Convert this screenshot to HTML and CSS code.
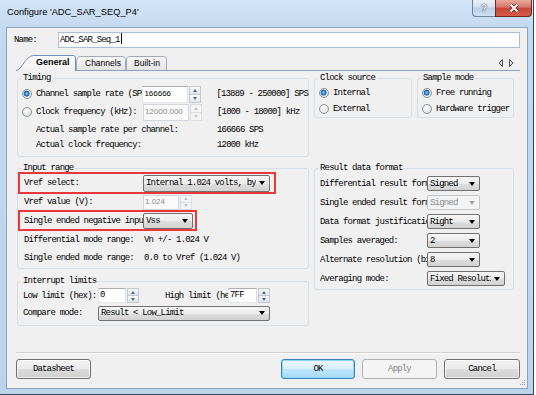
FILE: index.html
```html
<!DOCTYPE html>
<html lang="en">
<head>
    <meta charset="UTF-8">
    <meta name="viewport" content="width=device-width, initial-scale=1.0">
    <title>Configure 'ADC_SAR_SEQ_P4'</title>
    <link rel="stylesheet" href="styles.css">
</head>
<body>
<div class="window">
    <div class="titlebar">
        <span class="title">Configure 'ADC_SAR_SEQ_P4'</span>
        <div class="caption">
            <span class="cap-help">?</span>
            <span class="cap-close">
                <svg width="14" height="10" viewBox="0 0 14 10">
                    <path d="M3.5,1.5 L10.5,8.5 M10.5,1.5 L3.5,8.5" stroke="#5a2a26" stroke-width="3.4"/>
                    <path d="M3.5,1.5 L10.5,8.5 M10.5,1.5 L3.5,8.5" stroke="#fff" stroke-width="1.8"/>
                </svg>
            </span>
        </div>
    </div>

    <div class="client">
        <div class="name-row">
            <label>Name:</label>
            <div class="name-box">ADC_SAR_Seq_1<span class="caret"></span></div>
        </div>

        <div class="tabstrip">
            <div class="tab tab-active">
                <svg width="60" height="16" viewBox="0 0 60 16">
                    <defs>
                        <linearGradient id="tabOn" x1="0" y1="0" x2="0" y2="1">
                            <stop offset="0" stop-color="#ffffff"/>
                            <stop offset="1" stop-color="#f0f0f0"/>
                        </linearGradient>
                    </defs>
                    <path d="M0,16 L0,15.5 C6,15.5 9,0.5 18,0.5 L57,0.5 Q59.5,0.5 59.5,3 L59.5,16 Z" fill="url(#tabOn)"/>
                    <path d="M0,15.5 C6,15.5 9,0.5 18,0.5 L57,0.5 Q59.5,0.5 59.5,3 L59.5,16" fill="none" stroke="#6f8fbf"/>
                </svg>
                <span>General</span>
            </div>
            <div class="tab tab-channels">
                <svg width="50" height="14" viewBox="0 0 50 14">
                    <defs>
                        <linearGradient id="tabOff" x1="0" y1="0" x2="0" y2="1">
                            <stop offset="0" stop-color="#f9f9f9"/>
                            <stop offset="1" stop-color="#e4e4e4"/>
                        </linearGradient>
                    </defs>
                    <path d="M0.5,14 L0.5,5 Q1,0.5 5,0.5 L46.5,0.5 Q49.5,0.5 49.5,3.5 L49.5,14" fill="url(#tabOff)" stroke="#a3aab4"/>
                </svg>
                <span>Channels</span>
            </div>
            <div class="tab tab-builtin">
                <svg width="41" height="14" viewBox="0 0 41 14">
                    <path d="M0.5,14 L0.5,3.5 Q0.5,0.5 3.5,0.5 L37.5,0.5 Q40.5,0.5 40.5,3.5 L40.5,14" fill="url(#tabOff)" stroke="#a3aab4"/>
                </svg>
                <span>Built-in</span>
            </div>
            <svg class="tab-nav" width="16" height="8" viewBox="0 0 16 8">
                <path d="M4.5,0.5 L1,4 L4.5,7.5 Z" fill="#d8d8d8" stroke="#555"/>
                <path d="M11.5,0.5 L15,4 L11.5,7.5 Z" fill="#d8d8d8" stroke="#555"/>
            </svg>
        </div>

        <div class="pane">
            <div class="row-top">
                <fieldset class="group timing">
                    <legend>Timing</legend>
                    <div class="trow trow-first">
                        <span class="radio on"></span>
                        <span class="tlabel">Channel sample rate (SPS):</span>
                        <div class="spin spin-rate"><span class="spin-val sans">166666</span><span class="spin-btns"><i class="up"></i><i class="down"></i></span></div>
                        <span class="range">[13889 - 250000] SPS</span>
                    </div>
                    <div class="trow">
                        <span class="radio"></span>
                        <span class="tlabel">Clock frequency (kHz):</span>
                        <div class="spin spin-rate disabled"><span class="spin-val sans">12000.000</span><span class="spin-btns"><i class="up"></i><i class="down"></i></span></div>
                        <span class="range">[1000 - 18000] kHz</span>
                    </div>
                    <div class="trow info info-first">
                        <span class="info-label">Actual sample rate per channel:</span>
                        <span>166666 SPS</span>
                    </div>
                    <div class="trow info">
                        <span class="info-label">Actual clock frequency:</span>
                        <span>12000 kHz</span>
                    </div>
                </fieldset>

                <fieldset class="group clock">
                    <legend>Clock source</legend>
                    <div class="opt opt-first"><span class="radio on"></span>Internal</div>
                    <div class="opt"><span class="radio"></span>External</div>
                </fieldset>

                <fieldset class="group sample">
                    <legend>Sample mode</legend>
                    <div class="opt opt-first"><span class="radio on"></span>Free running</div>
                    <div class="opt"><span class="radio"></span>Hardware trigger</div>
                </fieldset>
            </div>

            <div class="row-mid">
                <div class="col-left">
                    <fieldset class="group input-range">
                        <legend>Input range</legend>
                        <div class="redbox vref-box">
                            <span class="ilabel">Vref select:</span>
                            <div class="combo combo-vref"><span>Internal 1.024 volts, bypassed</span></div>
                        </div>
                        <div class="irow irow-short">
                            <span class="ilabel">Vref value (V):</span>
                            <div class="spin spin-vref disabled"><span class="spin-val sans">1.024</span><span class="spin-btns"><i class="up"></i><i class="down"></i></span></div>
                        </div>
                        <div class="redbox neg-box">
                            <span class="ilabel">Single ended negative input:</span>
                            <div class="combo combo-vss"><span>Vss</span></div>
                        </div>
                        <div class="irow">
                            <span class="ilabel">Differential mode range:</span>
                            <span class="ival">Vn +/- 1.024 V</span>
                        </div>
                        <div class="irow">
                            <span class="ilabel">Single ended mode range:</span>
                            <span class="ival">0.0 to Vref (1.024 V)</span>
                        </div>
                    </fieldset>

                    <fieldset class="group interrupt">
                        <legend>Interrupt limits</legend>
                        <div class="lrow lrow-first">
                            <span class="llabel">Low limit (hex):</span>
                            <div class="spin spin-low"><span class="spin-val">0</span><span class="spin-btns"><i class="up"></i><i class="down"></i></span></div>
                            <span class="llabel high">High limit (hex):</span>
                            <div class="spin spin-high"><span class="spin-val">7FF</span><span class="spin-btns"><i class="up"></i><i class="down"></i></span></div>
                        </div>
                        <div class="lrow">
                            <span class="llabel">Compare mode:</span>
                            <div class="combo combo-compare"><span>Result &lt; Low_Limit</span></div>
                        </div>
                    </fieldset>
                </div>

                <fieldset class="group result">
                    <legend>Result data format</legend>
                    <div class="rrow rrow-first"><span class="rlabel">Differential result format:</span><div class="combo combo-short"><span>Signed</span></div></div>
                    <div class="rrow"><span class="rlabel">Single ended result format:</span><div class="combo combo-short disabled"><span>Signed</span></div></div>
                    <div class="rrow"><span class="rlabel">Data format justification:</span><div class="combo combo-short"><span>Right</span></div></div>
                    <div class="rrow"><span class="rlabel">Samples averaged:</span><div class="combo combo-short"><span>2</span></div></div>
                    <div class="rrow"><span class="rlabel">Alternate resolution (bits):</span><div class="combo combo-short"><span>8</span></div></div>
                    <div class="rrow"><span class="rlabel">Averaging mode:</span><div class="combo combo-avg"><span>Fixed Resolution</span></div></div>
                </fieldset>
            </div>
        </div>

        <div class="separator"></div>

        <div class="buttons">
            <button class="btn btn-datasheet">Datasheet</button>
            <button class="btn btn-ok">OK</button>
            <button class="btn btn-apply" disabled>Apply</button>
            <button class="btn btn-cancel">Cancel</button>
        </div>

        <!-- size grip in the corner -->
        <svg class="grip" width="6" height="6" viewBox="0 0 6 6">
            <rect x="4" y="0" width="1" height="1" fill="#a0a0a0"/>
            <rect x="2" y="2" width="1" height="1" fill="#a0a0a0"/>
            <rect x="4" y="2" width="1" height="1" fill="#a0a0a0"/>
            <rect x="0" y="4" width="1" height="1" fill="#a0a0a0"/>
            <rect x="2" y="4" width="1" height="1" fill="#a0a0a0"/>
            <rect x="4" y="4" width="1" height="1" fill="#a0a0a0"/>
        </svg>
    </div>
</div>
</body>
</html>
```

FILE: styles.css
```css
* {
    box-sizing: border-box;
}

body {
    margin: 0;
    background: #fff;
    color: #000;
    font-family: "Liberation Mono", "DejaVu Sans Mono", monospace;
    font-size: 9px;
    letter-spacing: -0.82px;
}

.window {
    width: 534px;
    height: 395px;
    display: flex;
    flex-direction: column;
    background: linear-gradient(#d3e4f6, #c3d9f1 30px, #bcd3ec);
    border-right: 1px solid #34465e;
    border-bottom: 1px solid #34465e;
}

/* title bar */
.titlebar {
    height: 27px;
    flex: none;
    display: flex;
    justify-content: space-between;
    align-items: flex-start;
    padding: 0 1px 0 7px;
}

.title {
    font-family: "Liberation Sans", Arial, sans-serif;
    font-size: 9.3px;
    letter-spacing: 0;
    line-height: 25px;
}

.caption {
    display: flex;
}

.cap-help {
    width: 23px;
    height: 17px;
    display: flex;
    align-items: center;
    justify-content: center;
    border: 1px solid #6f829b;
    border-top: 0;
    border-right: 0;
    border-radius: 0 0 0 4px;
    background: linear-gradient(#e9f0f9, #d3e0ef 45%, #bccfe6 50%, #cddff2);
    font-family: "Liberation Sans", sans-serif;
    font-weight: bold;
    font-size: 10px;
    letter-spacing: 0;
    color: #fff;
    text-shadow: 0 0 1px #2b3a4f, 0 0 1px #2b3a4f;
}

.cap-close {
    width: 37px;
    height: 17px;
    display: flex;
    align-items: center;
    justify-content: center;
    border: 1px solid #6b2a24;
    border-top: 0;
    border-radius: 0 0 4px 0;
    background: linear-gradient(#eaa99d, #d7776a 45%, #c7463a 50%, #d65b48);
}

/* client area */
.client {
    position: relative;
    height: 362px;
    flex: none;
    margin: 0 5px 0 6px;
    border: 1px solid #8ea3bc;
    background: #f0f0f0;
    display: flex;
    flex-direction: column;
    padding-bottom: 9px;
}

.name-row {
    display: flex;
    align-items: center;
    height: 16px;
    margin-top: 4px;
    padding-left: 7px;
}

.name-row label {
    width: 44px;
}

.name-box {
    width: 462px;
    height: 16px;
    background: #fff;
    border: 1px solid #a7c1dd;
    padding-left: 1px;
    line-height: 14px;
}

.caret {
    display: inline-block;
    width: 1px;
    height: 11px;
    margin-left: 1px;
    vertical-align: -2px;
    background: #000;
}

/* tabs */
.tabstrip {
    position: relative;
    z-index: 1;
    display: flex;
    align-items: flex-end;
    height: 15px;
    margin: 7px 7px 0 9px;
}

.tab {
    position: relative;
    height: 14px;
    font-family: "Liberation Sans", Arial, sans-serif;
    font-size: 8.5px;
    letter-spacing: 0;
    line-height: 14px;
}

.tab svg {
    position: absolute;
    left: 0;
    top: 0;
}

.tab span {
    position: relative;
}

.tab-active {
    width: 60px;
    height: 16px;
    margin-bottom: -1px;
    padding-left: 20px;
    font-size: 9px;
    font-weight: bold;
    line-height: 15px;
}

.tab-channels {
    width: 50px;
    padding-left: 9px;
}

.tab-builtin {
    width: 41px;
    padding-left: 8px;
}

.tab-nav {
    margin-left: auto;
    margin-right: 6px;
    align-self: center;
}

.pane {
    margin: 0 7px 0 9px;
    border-top: 1px solid #8da0bd;
}

/* group boxes */
.group {
    margin: 0;
    padding: 0;
    min-width: 0;
    border: 1px solid #d5dfe5;
    border-radius: 3px;
}

.group legend {
    height: 10px;
    margin-left: 3px;
    padding: 0 2px;
    line-height: 10px;
}

.row-top {
    display: flex;
    gap: 5px;
    margin-top: 2px;
    padding-left: 1px;
}

.timing {
    width: 292px;
    height: 84px;
}

.clock {
    width: 98px;
    height: 45px;
}

.sample {
    width: 97px;
    height: 45px;
}

.trow {
    display: flex;
    align-items: center;
    height: 18px;
    white-space: nowrap;
}

.trow-first {
    margin-top: 2px;
}

.tlabel {
    width: 107px;
    overflow: hidden;
}

.range {
    margin-left: 15px;
}

.trow.info {
    height: 15px;
    padding-left: 18px;
}

.info-first {
    margin-top: 1px;
}

.info-label {
    width: 181px;
}

.opt {
    display: flex;
    align-items: center;
    height: 16px;
    white-space: nowrap;
}

.opt-first {
    margin-top: 2px;
}

.radio {
    flex: none;
    width: 10px;
    height: 10px;
    margin: 0 4px;
    border: 1px solid #8e9194;
    border-radius: 50%;
    background: radial-gradient(circle at 40% 35%, #fdfdfd, #d6d6d6);
}

.radio.on {
    background: radial-gradient(circle at 45% 45%, #9fe0ff 0, #2f8ad8 1.5px, #175fa8 2.6px, #cfd8e0 3.2px, #f2f2f2 4.5px);
}

.row-mid {
    display: flex;
    align-items: flex-start;
    gap: 5px;
    margin-top: 6px;
    padding-left: 1px;
}

.col-left {
    width: 292px;
    display: flex;
    flex-direction: column;
}

.input-range {
    height: 106px;
}

.redbox {
    display: flex;
    align-items: center;
    border: 2px solid #e8383b;
    padding-left: 4px;
    white-space: nowrap;
}

.vref-box {
    width: 258px;
    height: 22px;
    margin-top: -1px;
}

.neg-box {
    width: 179px;
    height: 21px;
}

.irow {
    display: flex;
    align-items: center;
    height: 18px;
    padding-left: 6px;
    white-space: nowrap;
}

.irow-short {
    height: 16px;
}

.ilabel {
    flex: none;
    width: 119px;
    overflow: hidden;
}

.ival {
    padding-left: 1px;
}

.interrupt {
    height: 50px;
    margin-top: 7px;
}

.lrow {
    display: flex;
    align-items: center;
    height: 18px;
    padding-left: 5px;
    white-space: nowrap;
}

.lrow-first {
    height: 17px;
    margin-top: 1px;
}

.llabel {
    flex: none;
    width: 75px;
    overflow: hidden;
}

.llabel.high {
    width: 63px;
    margin-left: 26px;
}

.result {
    width: 200px;
    height: 127px;
}

.rrow {
    display: flex;
    align-items: center;
    height: 19px;
    padding-left: 5px;
    white-space: nowrap;
}

.rrow-first {
    margin-top: 1px;
}

.rlabel {
    flex: none;
    width: 107px;
    overflow: hidden;
}

/* combo boxes */
.combo {
    flex: none;
    display: flex;
    align-items: center;
    height: 15px;
    padding-left: 2px;
    border: 1px solid #707070;
    border-radius: 2px;
    background: linear-gradient(#f6f6f6, #ececec 50%, #dedede 51%, #d2d2d2);
    white-space: nowrap;
}

.combo span {
    flex: 1;
    overflow: hidden;
}

.combo::after {
    content: "";
    flex: none;
    margin: 0 4px 0 3px;
    border-left: 3px solid transparent;
    border-right: 3px solid transparent;
    border-top: 4px solid #000;
}

.combo.disabled {
    border-color: #bfc4c8;
    background: #f4f4f4;
    color: #8d8d8d;
}

.combo.disabled::after {
    border-top-color: #a8a8a8;
}

.combo-vref {
    width: 127px;
    height: 17px;
}

.combo-vss {
    width: 50px;
    height: 16px;
}

.combo-short {
    width: 53px;
}

.combo-avg {
    width: 78px;
}

.combo-compare {
    width: 172px;
}

/* numeric up-down */
.spin {
    flex: none;
    display: flex;
    height: 17px;
}

.spin-val {
    flex: 1;
    padding-left: 1px;
    background: #fff;
    border: 1px solid #abadb3;
    border-color: #abadb3 #dbdfe6 #e3e9ef #e2e3ea;
    line-height: 14px;
    overflow: hidden;
}

.spin-val.sans {
    font-family: "Liberation Sans", Arial, sans-serif;
    font-size: 8px;
    letter-spacing: 0;
}

.spin-btns {
    flex: none;
    width: 12px;
    margin-left: 1px;
    display: flex;
    flex-direction: column;
}

.spin-btns i {
    flex: 1;
    display: flex;
    align-items: center;
    justify-content: center;
    border: 1px solid #c2c8cf;
    background: linear-gradient(#f8f8f8, #e2e6ea);
}

.spin-btns i + i {
    margin-top: -1px;
}

.spin-btns .up::after {
    content: "";
    border-left: 2.5px solid transparent;
    border-right: 2.5px solid transparent;
    border-bottom: 3px solid #4f6a8c;
}

.spin-btns .down::after {
    content: "";
    border-left: 2.5px solid transparent;
    border-right: 2.5px solid transparent;
    border-top: 3px solid #4f6a8c;
}

.spin.disabled .spin-val {
    color: #8d8d8d;
    border-color: #d3d7dc;
    background: #fafafa;
}

.spin.disabled .spin-btns i {
    border-color: #dadde1;
    background: #f4f4f4;
}

.spin.disabled .spin-btns i::after {
    border-top-color: #c0c4c8;
    border-bottom-color: #c0c4c8;
}

.spin-rate {
    width: 59px;
}

.spin-vref {
    width: 49px;
    height: 15px;
}

.spin-low {
    width: 41px;
    height: 15px;
}

.spin-high {
    width: 42px;
    height: 15px;
}

.spin-vref .spin-val,
.spin-low .spin-val,
.spin-high .spin-val {
    line-height: 12px;
}

/* bottom buttons */
.separator {
    height: 2px;
    margin: auto 7px 5px 9px;
    border-top: 1px solid #d0d0d0;
    border-bottom: 1px solid #fff;
}

.buttons {
    display: flex;
    margin: 0 7px 0 9px;
}

.btn {
    height: 20px;
    padding: 0;
    font-family: inherit;
    font-size: inherit;
    letter-spacing: inherit;
    color: #000;
    border: 1px solid #707070;
    border-radius: 3px;
    background: linear-gradient(#f2f2f2, #ebebeb 50%, #dddddd 51%, #cfcfcf);
    box-shadow: inset 0 0 0 1px rgba(255, 255, 255, 0.7);
}

.btn-datasheet {
    width: 75px;
}

.btn-ok {
    width: 74px;
    margin-left: auto;
    border-color: #3c7fb1;
    background: linear-gradient(#eaf6fd, #d9f0fc 50%, #bee6fd 51%, #a7d9f5);
    box-shadow: inset 0 0 0 1px #8fd6f8;
}

.btn-apply {
    width: 75px;
    margin-left: 7px;
    color: #838383;
    border-color: #adb2b5;
    background: #f4f4f4;
    box-shadow: none;
}

.btn-cancel {
    width: 76px;
    margin-left: 7px;
}

.grip {
    position: absolute;
    right: 1px;
    bottom: 2px;
}
```
